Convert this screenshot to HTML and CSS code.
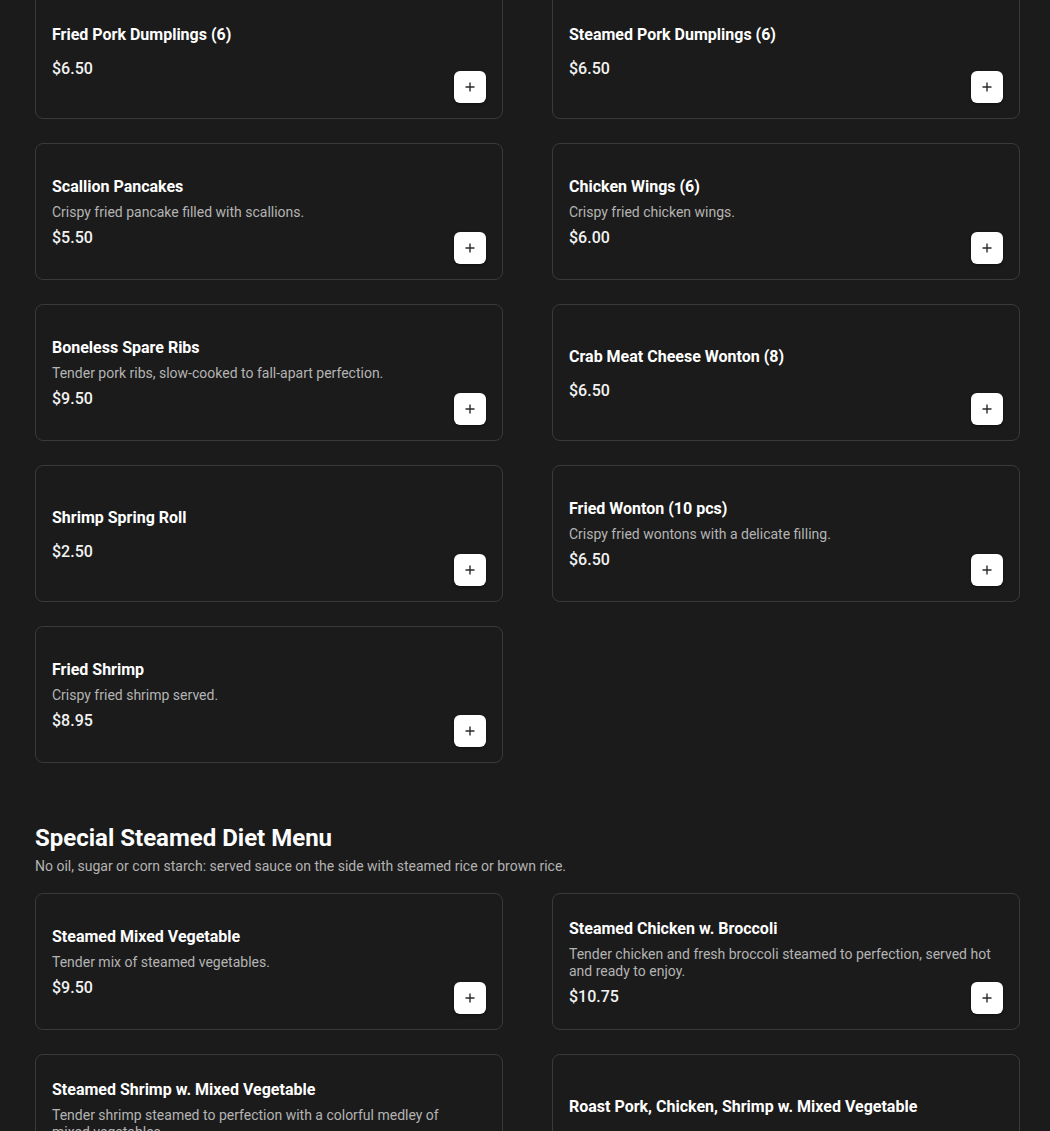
FILE: index.html
```html
<!DOCTYPE html>
<html lang="en">
<head>
<meta charset="utf-8">
<title>Menu</title>
<link rel="stylesheet" href="styles.css">
</head>
<body>
<main class="menu">
  <section class="section section-first">
    <div class="grid">
      <article class="card">
        <div class="info">
          <h3 class="name">Fried Pork Dumplings (6)</h3>
          <p class="price">$6.50</p>
        </div>
        <button class="add" aria-label="Add"><svg viewBox="0 0 12 12" width="12" height="12"><path d="M6 1.5v9M1.5 6h9" stroke="#2b2b2b" stroke-width="1.4" fill="none"/></svg></button>
      </article>
      <article class="card">
        <div class="info">
          <h3 class="name">Steamed Pork Dumplings (6)</h3>
          <p class="price">$6.50</p>
        </div>
        <button class="add" aria-label="Add"><svg viewBox="0 0 12 12" width="12" height="12"><path d="M6 1.5v9M1.5 6h9" stroke="#2b2b2b" stroke-width="1.4" fill="none"/></svg></button>
      </article>
      <article class="card">
        <div class="info">
          <h3 class="name">Scallion Pancakes</h3>
          <p class="desc">Crispy fried pancake filled with scallions.</p>
          <p class="price">$5.50</p>
        </div>
        <button class="add" aria-label="Add"><svg viewBox="0 0 12 12" width="12" height="12"><path d="M6 1.5v9M1.5 6h9" stroke="#2b2b2b" stroke-width="1.4" fill="none"/></svg></button>
      </article>
      <article class="card">
        <div class="info">
          <h3 class="name">Chicken Wings (6)</h3>
          <p class="desc">Crispy fried chicken wings.</p>
          <p class="price">$6.00</p>
        </div>
        <button class="add" aria-label="Add"><svg viewBox="0 0 12 12" width="12" height="12"><path d="M6 1.5v9M1.5 6h9" stroke="#2b2b2b" stroke-width="1.4" fill="none"/></svg></button>
      </article>
      <article class="card">
        <div class="info">
          <h3 class="name">Boneless Spare Ribs</h3>
          <p class="desc">Tender pork ribs, slow-cooked to fall-apart perfection.</p>
          <p class="price">$9.50</p>
        </div>
        <button class="add" aria-label="Add"><svg viewBox="0 0 12 12" width="12" height="12"><path d="M6 1.5v9M1.5 6h9" stroke="#2b2b2b" stroke-width="1.4" fill="none"/></svg></button>
      </article>
      <article class="card">
        <div class="info">
          <h3 class="name">Crab Meat Cheese Wonton (8)</h3>
          <p class="price">$6.50</p>
        </div>
        <button class="add" aria-label="Add"><svg viewBox="0 0 12 12" width="12" height="12"><path d="M6 1.5v9M1.5 6h9" stroke="#2b2b2b" stroke-width="1.4" fill="none"/></svg></button>
      </article>
      <article class="card">
        <div class="info">
          <h3 class="name">Shrimp Spring Roll</h3>
          <p class="price">$2.50</p>
        </div>
        <button class="add" aria-label="Add"><svg viewBox="0 0 12 12" width="12" height="12"><path d="M6 1.5v9M1.5 6h9" stroke="#2b2b2b" stroke-width="1.4" fill="none"/></svg></button>
      </article>
      <article class="card">
        <div class="info">
          <h3 class="name">Fried Wonton (10 pcs)</h3>
          <p class="desc">Crispy fried wontons with a delicate filling.</p>
          <p class="price">$6.50</p>
        </div>
        <button class="add" aria-label="Add"><svg viewBox="0 0 12 12" width="12" height="12"><path d="M6 1.5v9M1.5 6h9" stroke="#2b2b2b" stroke-width="1.4" fill="none"/></svg></button>
      </article>
      <article class="card">
        <div class="info">
          <h3 class="name">Fried Shrimp</h3>
          <p class="desc">Crispy fried shrimp served.</p>
          <p class="price">$8.95</p>
        </div>
        <button class="add" aria-label="Add"><svg viewBox="0 0 12 12" width="12" height="12"><path d="M6 1.5v9M1.5 6h9" stroke="#2b2b2b" stroke-width="1.4" fill="none"/></svg></button>
      </article>
    </div>
  </section>

  <section class="section">
    <h2 class="section-title">Special Steamed Diet Menu</h2>
    <p class="section-sub">No oil, sugar or corn starch: served sauce on the side with steamed rice or brown rice.</p>
    <div class="grid">
      <article class="card">
        <div class="info">
          <h3 class="name">Steamed Mixed Vegetable</h3>
          <p class="desc">Tender mix of steamed vegetables.</p>
          <p class="price">$9.50</p>
        </div>
        <button class="add" aria-label="Add"><svg viewBox="0 0 12 12" width="12" height="12"><path d="M6 1.5v9M1.5 6h9" stroke="#2b2b2b" stroke-width="1.4" fill="none"/></svg></button>
      </article>
      <article class="card">
        <div class="info">
          <h3 class="name">Steamed Chicken w. Broccoli</h3>
          <p class="desc">Tender chicken and fresh broccoli steamed to perfection, served hot and ready to enjoy.</p>
          <p class="price">$10.75</p>
        </div>
        <button class="add" aria-label="Add"><svg viewBox="0 0 12 12" width="12" height="12"><path d="M6 1.5v9M1.5 6h9" stroke="#2b2b2b" stroke-width="1.4" fill="none"/></svg></button>
      </article>
      <article class="card">
        <div class="info">
          <h3 class="name">Steamed Shrimp w. Mixed Vegetable</h3>
          <p class="desc">Tender shrimp steamed to perfection with a colorful medley of mixed vegetables.</p>
          <p class="price">$11.75</p>
        </div>
        <button class="add" aria-label="Add"><svg viewBox="0 0 12 12" width="12" height="12"><path d="M6 1.5v9M1.5 6h9" stroke="#2b2b2b" stroke-width="1.4" fill="none"/></svg></button>
      </article>
      <article class="card">
        <div class="info">
          <h3 class="name">Roast Pork, Chicken, Shrimp w. Mixed Vegetable</h3>
          <p class="price">$11.75</p>
        </div>
        <button class="add" aria-label="Add"><svg viewBox="0 0 12 12" width="12" height="12"><path d="M6 1.5v9M1.5 6h9" stroke="#2b2b2b" stroke-width="1.4" fill="none"/></svg></button>
      </article>
    </div>
  </section>
</main>
</body>
</html>
```

FILE: styles.css
```css
* {
  box-sizing: border-box;
}

html, body {
  margin: 0;
  padding: 0;
  background: #1b1b1b;
}

body {
  font-family: Roboto, "Liberation Sans", Arial, sans-serif;
  color: #ffffff;
  overflow: hidden;
}

.menu {
  padding: 0 30px 0 35px;
}

.section-first {
  margin-top: -18px;
}

.section + .section {
  margin-top: 61px;
}

.section-title {
  margin: 0 0 4px;
  font-size: 24px;
  line-height: 28px;
  font-weight: 700;
  color: #ffffff;
}

.section-sub {
  margin: 0 0 17px;
  font-size: 14px;
  line-height: 20px;
  color: #b3b3b3;
}

.grid {
  display: grid;
  grid-template-columns: 468px 468px;
  column-gap: 49px;
  row-gap: 24px;
}

.card {
  display: grid;
  grid-template-columns: 1fr;
  grid-template-rows: 1fr;
  height: 137px;
  padding: 17px 16px 15px;
  border: 1px solid #3a3a3a;
  border-radius: 8px;
  background: #1b1b1b;
}

.info {
  grid-area: 1 / 1;
  align-self: center;
  display: flex;
  flex-direction: column;
  padding-right: 10px;
}

.name {
  margin: 0 0 5px;
  font-size: 16px;
  line-height: 24px;
  font-weight: 700;
  color: #ffffff;
}

.desc {
  margin: 0;
  font-size: 14px;
  line-height: 17px;
  color: #b4b4b4;
}

.price {
  margin: 5px 0 0;
  font-size: 16px;
  line-height: 24px;
  font-weight: 500;
  color: #f2f2f2;
}

.add {
  grid-area: 1 / 1;
  justify-self: end;
  align-self: end;
  width: 32px;
  height: 32px;
  padding: 0;
  border: none;
  border-radius: 6px;
  background: #ffffff;
  box-shadow: 0 1px 3px rgba(0, 0, 0, 0.5);
  display: flex;
  align-items: center;
  justify-content: center;
  cursor: pointer;
}

.add svg {
  display: block;
}
```
